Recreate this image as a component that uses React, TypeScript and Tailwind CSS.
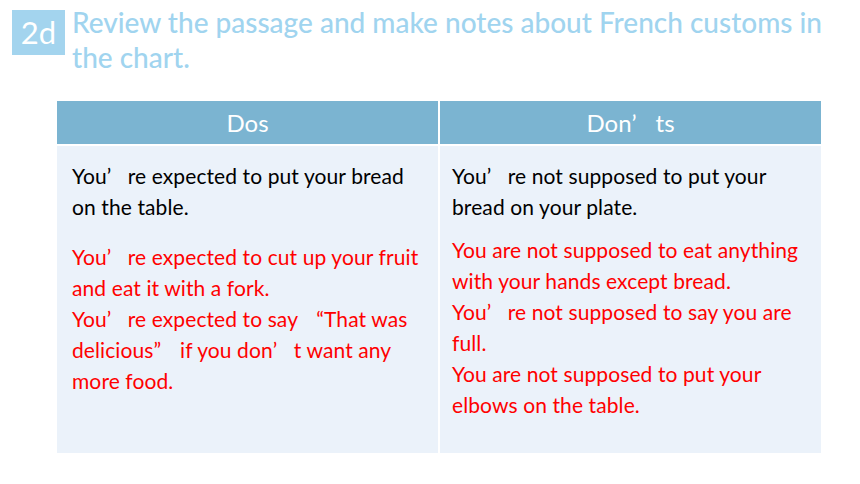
import React from "react";

const Ap = () => (
  <span className="inline-block w-[1em] text-left">’</span>
);
const LQ = () => (
  <span className="inline-block w-[1em] text-right">“</span>
);
const RQ = () => (
  <span className="inline-block w-[1em] text-left">”</span>
);

export default function App() {
  return (
    <div
      className="w-[860px] h-[484px] bg-white overflow-hidden"
      style={{ fontFamily: "Lato, 'Noto Sans', sans-serif" }}
    >
      <div className="flex items-start pl-[12px] pt-[10px] gap-[7px]">
        <div className="w-[53px] h-[45px] bg-[#a3d4ee] text-white text-[31px] leading-[45px] text-center shrink-0">
          2d
        </div>
        <div className="text-[#a0d4ef] text-[28px] leading-[35px] font-medium -mt-[5px] w-[775px]">
          Review the passage and make notes about French customs in the chart.
        </div>
      </div>

      <div className="ml-[57px] mt-[26px] w-[764px] grid grid-cols-2 gap-x-[2px] gap-y-[2px] bg-white">
        <div className="h-[43px] bg-[#7bb4d1] text-white text-[24px] flex items-center justify-center">
          Dos
        </div>
        <div className="h-[43px] bg-[#7bb4d1] text-white text-[24px] flex items-center justify-center">
          Don<Ap />ts
        </div>
        <div className="h-[307px] bg-[#ebf2fa] pl-[15px] pr-[8px] pt-[14px] text-[21px] tracking-[0.1px] leading-[31px]">
          <p className="text-black">
            You<Ap />re expected to put your bread on the table.
          </p>
          <p className="text-[#ff0000] mt-[19px]">
            You<Ap />re expected to cut up your fruit and eat it with a fork.
            <br />
            You<Ap />re expected to say <LQ />That was delicious<RQ /> if you don<Ap />t want any more food.
          </p>
        </div>
        <div className="h-[307px] bg-[#ebf2fa] pl-[12px] pr-[8px] pt-[14px] text-[21px] tracking-[0.1px] leading-[31px]">
          <p className="text-black">
            You<Ap />re not supposed to put your bread on your plate.
          </p>
          <p className="text-[#ff0000] mt-[12px]">
            You are not supposed to eat anything with your hands except bread.
            <br />
            You<Ap />re not supposed to say you are full.
            <br />
            You are not supposed to put your elbows on the table.
          </p>
        </div>
      </div>
    </div>
  );
}
